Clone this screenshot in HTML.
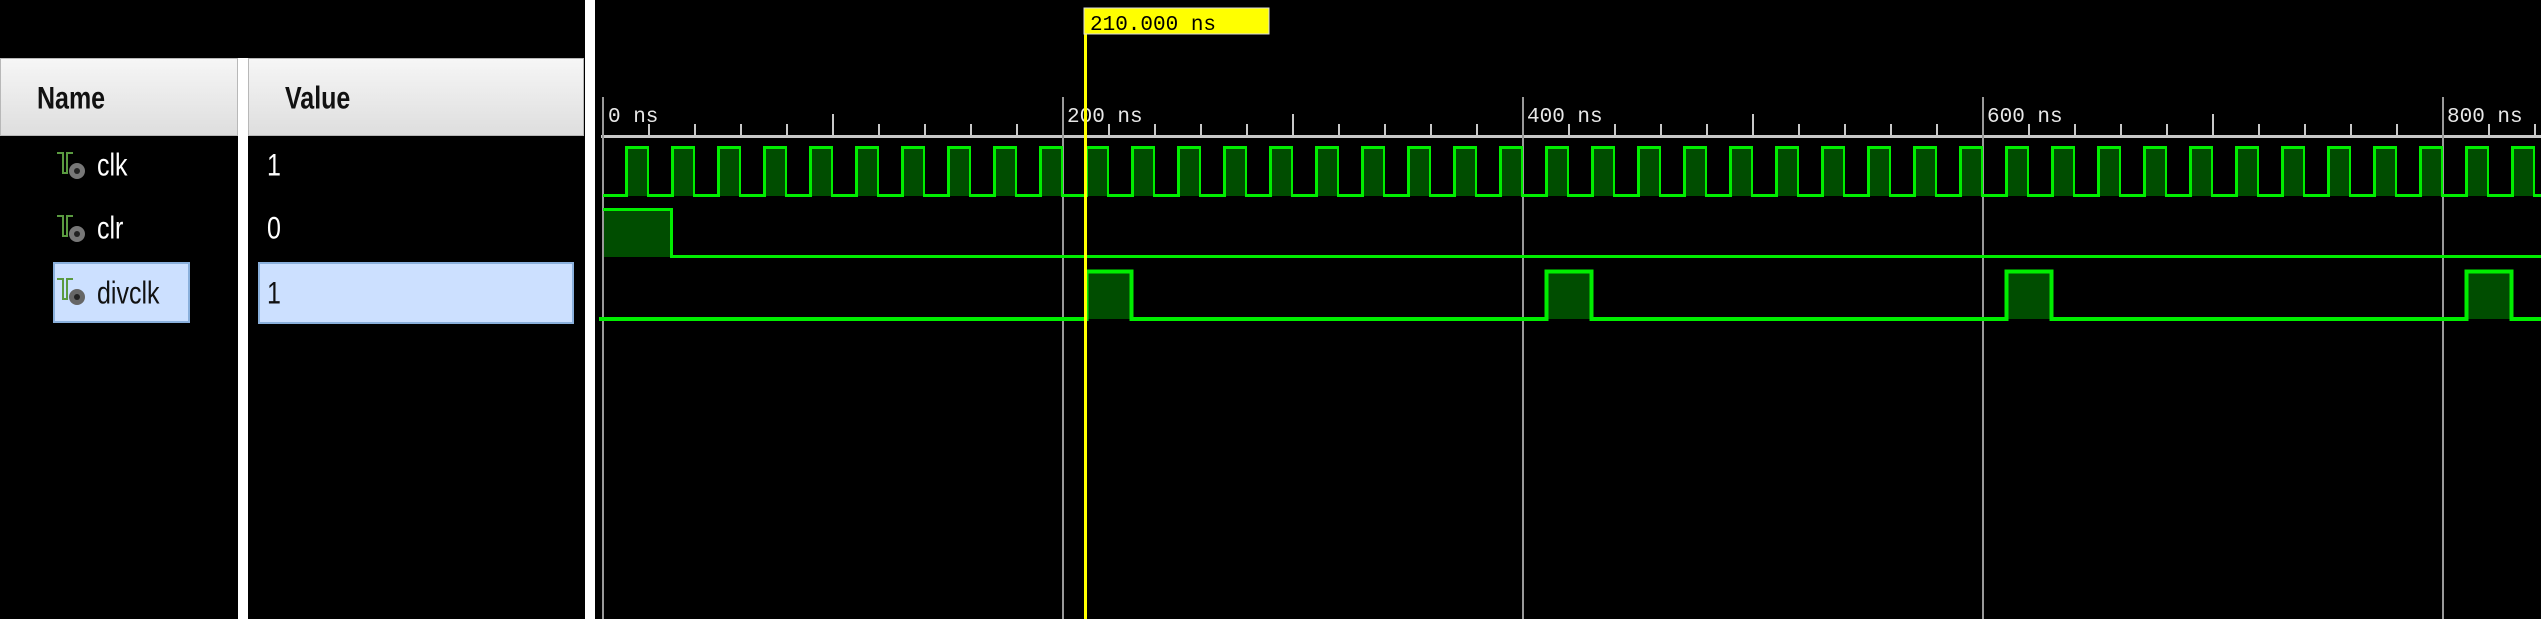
<!DOCTYPE html>
<html><head><meta charset="utf-8"><style>
html,body{margin:0;padding:0;background:#000;width:2541px;height:619px;overflow:hidden;position:relative;font-family:"Liberation Sans",sans-serif}
.hdr{position:absolute;top:58px;height:78px;background:linear-gradient(#f6f6f6,#dedede);border:1px solid #b8b8b8;box-sizing:border-box}
.ht{position:absolute;top:22px;font-weight:bold;font-size:25px;color:#111;transform:scaleY(1.25);transform-origin:left top}
.t{position:absolute;color:#fff;font-size:25px;transform:scaleY(1.25);transform-origin:left top}
.sel{position:absolute;background:#cce0ff;border:2px solid #8ab0dc;box-sizing:border-box}
.ic{position:absolute}
</style></head><body>
<div class="hdr" style="left:0;width:238px"><div class="ht" style="left:36px">Name</div></div>
<div class="hdr" style="left:248px;width:336px"><div class="ht" style="left:36px">Value</div></div>
<div style="position:absolute;left:238px;top:58px;width:10px;height:561px;background:#fff"></div>
<div style="position:absolute;left:585px;top:0;width:10px;height:619px;background:#fff"></div>

<div class="sel" style="left:53px;top:262px;width:137px;height:61px"></div>
<div class="sel" style="left:258px;top:262px;width:316px;height:62px"></div>

<svg class="ic" style="left:55px;top:151px" width="32" height="30"><path d="M2 2h6v20h4V2h6" fill="none" stroke="#5a9a40" stroke-width="2"/><circle cx="22" cy="20" r="8" fill="#777"/><circle cx="22" cy="20" r="3" fill="#222"/></svg>
<svg class="ic" style="left:55px;top:214px" width="32" height="30"><path d="M2 2h6v20h4V2h6" fill="none" stroke="#5a9a40" stroke-width="2"/><circle cx="22" cy="20" r="8" fill="#777"/><circle cx="22" cy="20" r="3" fill="#222"/></svg>
<svg class="ic" style="left:55px;top:277px" width="32" height="30"><path d="M2 2h6v20h4V2h6" fill="none" stroke="#5a9a40" stroke-width="2"/><circle cx="22" cy="20" r="8" fill="#666"/><circle cx="22" cy="20" r="3" fill="#222"/></svg>

<div class="t" style="left:97px;top:148px">clk</div>
<div class="t" style="left:97px;top:211px">clr</div>
<div class="t" style="left:97px;top:276px;color:#111">divclk</div>
<div class="t" style="left:267px;top:148px">1</div>
<div class="t" style="left:267px;top:211px">0</div>
<div class="t" style="left:267px;top:276px;color:#111">1</div>

<svg style="position:absolute;left:0;top:0" width="2541" height="619">
<defs>
<pattern id="clk" patternUnits="userSpaceOnUse" x="603" y="146" width="46" height="52">
<rect x="23" y="2" width="23" height="48" fill="#004d00"/>
<path d="M0 49.5H23.5V1.5H45.5V49.5H46" fill="none" stroke="#00ee00" stroke-width="3"/>
</pattern>
<pattern id="div" patternUnits="userSpaceOnUse" x="1063" y="268" width="460" height="54">
<rect x="23" y="3" width="46" height="48" fill="#004d00"/>
<path d="M0 51H23.5V3.5H68.5V51H460" fill="none" stroke="#00ee00" stroke-width="4"/>
</pattern>
<pattern id="tk" patternUnits="userSpaceOnUse" x="602" y="124" width="46" height="14">
<rect x="0" y="0" width="2" height="14" fill="#c8c8c8"/>
</pattern>
</defs>
<rect x="603" y="124" width="1938" height="12" fill="url(#tk)"/>
<rect x="601" y="135" width="1940" height="3" fill="#c8c8c8"/>
<g fill="#c8c8c8">
<rect x="832" y="114" width="2" height="22"/><rect x="1292" y="114" width="2" height="22"/><rect x="1752" y="114" width="2" height="22"/><rect x="2212" y="114" width="2" height="22"/>
</g>
<g fill="#9a9a9a">
<rect x="602" y="97" width="2" height="522"/><rect x="1062" y="97" width="2" height="522"/><rect x="1522" y="97" width="2" height="522"/><rect x="1982" y="97" width="2" height="522"/><rect x="2442" y="97" width="2" height="522"/>
</g>
<g font-family="Liberation Mono,monospace" font-size="21" fill="#e8e8e8">
<text x="608" y="122">0 ns</text><text x="1067" y="122">200 ns</text><text x="1527" y="122">400 ns</text><text x="1987" y="122">600 ns</text><text x="2447" y="122">800 ns</text>
</g>
<rect x="603" y="146" width="1938" height="52" fill="url(#clk)"/>
<rect x="604" y="210" width="67" height="47" fill="#004d00"/>
<path d="M603 209.5H671.5V256.5H2541" fill="none" stroke="#00ee00" stroke-width="3"/>
<path d="M599 319H1063" stroke="#00ee00" stroke-width="4"/>
<rect x="1063" y="268" width="1478" height="54" fill="url(#div)"/>
<rect x="1084" y="8" width="3" height="611" fill="#ffff00"/>
<rect x="1084" y="8" width="185" height="26" fill="#ffff00" stroke="#ddd" stroke-width="1"/>
<text x="1090" y="30" font-family="Liberation Mono,monospace" font-size="21" fill="#000">210.000 ns</text>
</svg>
</body></html>
